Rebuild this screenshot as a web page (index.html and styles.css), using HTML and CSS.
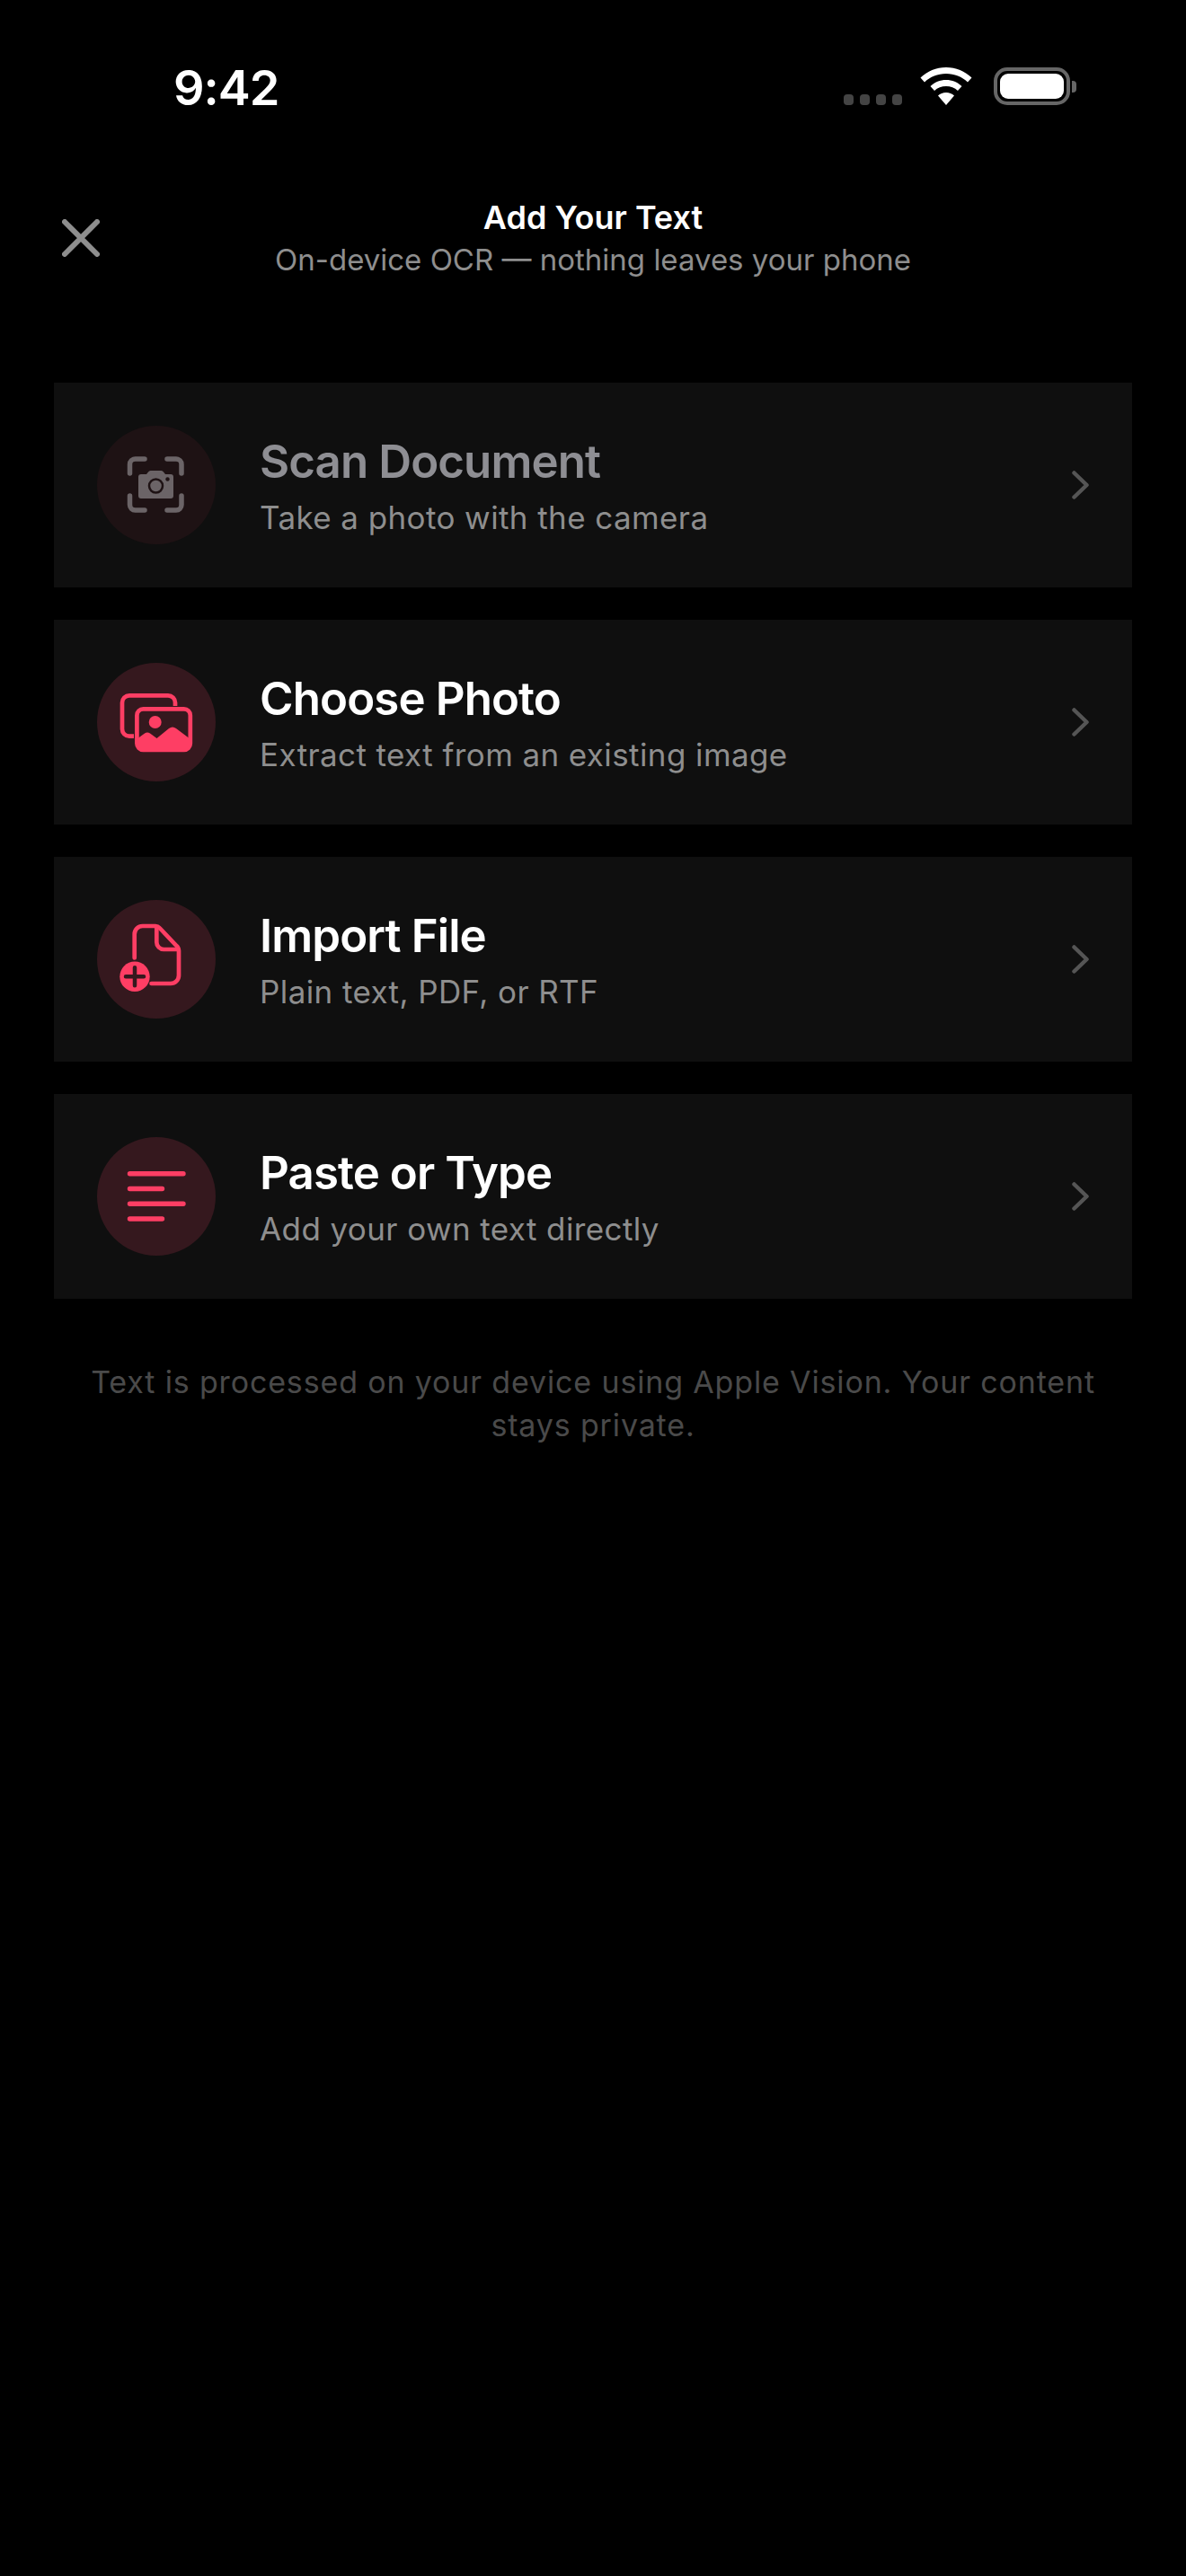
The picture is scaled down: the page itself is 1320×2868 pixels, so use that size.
FILE: index.html

```html
<!DOCTYPE html>
<html lang="en">
<head>
    <meta charset="UTF-8">
    <meta name="viewport" content="width=device-width, initial-scale=1.0">
    <title>Add Your Text</title>
    <link rel="stylesheet" href="styles.css">
</head>
<body>
<div class="status-bar">
    <span class="time">9:42</span>
    <div class="status-icons">
        <div class="signal"><i></i><i></i><i></i><i></i></div>
        <svg class="wifi" width="58" height="42" viewBox="0 0 58 42">
            <path fill="#fff" d="M29 0C18 0 8 4.300 0.500 11.500L5 16.500C11.300 10.500 19.700 7 29 7C38.300 7 46.700 10.500 53 16.500L57.500 11.500C50 4.300 40 0 29 0Z"/>
            <path fill="#fff" d="M29 14C22.300 14 16.200 16.600 11.500 21L16 26C19.500 22.700 24 21 29 21C34 21 38.500 22.700 42 26L46.500 21C41.800 16.600 35.700 14 29 14Z"/>
            <path fill="#fff" d="M29 28C25.500 28 22.300 29.300 20 31.500L29 42L38 31.500C35.700 29.300 32.500 28 29 28Z"/>
        </svg>
        <div class="battery"><div class="battery-level"></div></div>
        <div class="battery-nub"></div>
    </div>
</div>

<header class="top">
    <button class="close-btn" aria-label="Close">
        <svg width="42" height="42" viewBox="0 0 42 42"><path d="M3 3L39 39M39 3L3 39" stroke="#8e8e8e" stroke-width="6" stroke-linecap="round"/></svg>
    </button>
    <div class="top-text">
        <h1>Add Your Text</h1>
        <p>On-device OCR — nothing leaves your phone</p>
    </div>
</header>

<div class="options">
    <div class="option dim">
        <div class="icon">
            <svg width="132" height="132" viewBox="0 0 132 132">
                <path d="M36.500 53V43a6 6 0 0 1 6-6H53M78 37h10a6 6 0 0 1 6 6V53M36.500 78V88a6 6 0 0 0 6 6H53M78 94h10a6 6 0 0 0 6-6V78" fill="none" stroke="#6b6467" stroke-width="5.500" stroke-linecap="round"/>
                <path fill="#6b6467" d="M49 54h6l2-2.500a3 3 0 0 1 2.500-1.500h12a3 3 0 0 1 2.500 1.500l2 2.500h6a3 3 0 0 1 3 3v21a3 3 0 0 1-3 3H49a3 3 0 0 1-3-3V57a3 3 0 0 1 3-3Z"/>
                <circle cx="65.500" cy="67" r="7.500" fill="#6b6467" stroke="#1e1214" stroke-width="2.500"/>
                <circle cx="78.500" cy="59.500" r="2.200" fill="#1e1214"/>
            </svg>
        </div>
        <div class="option-text">
            <div class="option-title">Scan Document</div>
            <div class="option-sub">Take a photo with the camera</div>
        </div>
        <svg class="chevron" width="20" height="32" viewBox="0 0 20 32"><path d="M2.500 2.500L16.500 16L2.500 29.500" fill="none" stroke="#555" stroke-width="4.500" stroke-linecap="round" stroke-linejoin="round"/></svg>
    </div>

    <div class="option">
        <div class="icon">
            <svg width="132" height="132" viewBox="0 0 132 132">
                <path d="M41 81.700H36a8 8 0 0 1-8-8V44.300a8 8 0 0 1 8-8H79a8 8 0 0 1 8 8V48" fill="none" stroke="#fe3e64" stroke-width="4.700"/>
                <rect x="44.400" y="51.400" width="59.400" height="45.400" rx="7" fill="none" stroke="#fe3e64" stroke-width="4.700"/>
                <circle cx="64.700" cy="66" r="7" fill="#fe3e64"/>
                <path fill="#fe3e64" d="M44 85L53 78.500Q56 76.500 59 78.500L66.500 84L80 73Q84 70 88 73L104 85V91a8 8 0 0 1-8 8H52a8 8 0 0 1-8-8Z"/>
            </svg>
        </div>
        <div class="option-text">
            <div class="option-title">Choose Photo</div>
            <div class="option-sub">Extract text from an existing image</div>
        </div>
        <svg class="chevron" width="20" height="32" viewBox="0 0 20 32"><path d="M2.500 2.500L16.500 16L2.500 29.500" fill="none" stroke="#555" stroke-width="4.500" stroke-linecap="round" stroke-linejoin="round"/></svg>
    </div>

    <div class="option">
        <div class="icon">
            <svg width="132" height="132" viewBox="0 0 132 132">
                <path d="M41.700 64.500V38a9 9 0 0 1 9-9H65a6 6 0 0 1 4.500 2L88 50.500a8 8 0 0 1 3 6V84a9 9 0 0 1-9 9H60.500" fill="none" stroke="#fe3e64" stroke-width="4.700" stroke-linecap="round"/>
                <path d="M66.300 29V47a8 8 0 0 0 8 8H90" fill="none" stroke="#fe3e64" stroke-width="4.700"/>
                <circle cx="42" cy="85.300" r="16.700" fill="#fe3e64"/>
                <path d="M32 85.300H52M42 75.300V95.300" stroke="#35181e" stroke-width="4.500" stroke-linecap="round"/>
            </svg>
        </div>
        <div class="option-text">
            <div class="option-title">Import File</div>
            <div class="option-sub">Plain text, PDF, or RTF</div>
        </div>
        <svg class="chevron" width="20" height="32" viewBox="0 0 20 32"><path d="M2.500 2.500L16.500 16L2.500 29.500" fill="none" stroke="#555" stroke-width="4.500" stroke-linecap="round" stroke-linejoin="round"/></svg>
    </div>

    <div class="option">
        <div class="icon">
            <svg width="132" height="132" viewBox="0 0 132 132">
                <path d="M36.500 40.700H96M36.500 57.500H72.500M36.500 74.300H96M36.500 91H72.500" stroke="#fe3e64" stroke-width="5.400" stroke-linecap="round"/>
            </svg>
        </div>
        <div class="option-text">
            <div class="option-title">Paste or Type</div>
            <div class="option-sub">Add your own text directly</div>
        </div>
        <svg class="chevron" width="20" height="32" viewBox="0 0 20 32"><path d="M2.500 2.500L16.500 16L2.500 29.500" fill="none" stroke="#555" stroke-width="4.500" stroke-linecap="round" stroke-linejoin="round"/></svg>
    </div>
</div>

<p class="note">Text is processed on your device using Apple Vision. Your content stays private.</p>
</body>
</html>
```

FILE: styles.css

```css
body { font-family: Inter, "Liberation Sans", sans-serif; background-color: #000; color: #fff; margin: 0; height: 2868px; overflow: hidden; }

/* status bar */
.status-bar { display: flex; justify-content: space-between; align-items: flex-start; height: 208px; padding: 65px 122px 0 193px; box-sizing: border-box; }
.time { font-size: 54px; font-weight: 600; line-height: 65px; letter-spacing: -1px; }
.status-icons { display: flex; align-items: flex-start; margin-top: 10px; }
.signal { display: flex; gap: 7px; margin-top: 30px; margin-right: 20px; }
.signal i { display: block; width: 11px; height: 12px; border-radius: 4px; background-color: #444; }
.wifi { margin-right: 24px; }
.battery { width: 85px; height: 42px; box-sizing: border-box; border: 4.500px solid #666; border-radius: 15px; padding: 3px; }
.battery-level { height: 100%; background-color: #fff; border-radius: 9px; }
.battery-nub { width: 5px; height: 13px; margin: 15px 0 0 2px; background-color: #666; border-radius: 0 4px 4px 0; }

/* header */
.top { display: flex; align-items: center; height: 110px; position: relative; justify-content: center; }
.close-btn { position: absolute; left: 69px; top: 36px; padding: 0; border: none; background: none; width: 42px; height: 42px; }
.top-text { text-align: center; padding-top: 3px; }
.top h1 { margin: 0; font-size: 36px; font-weight: 600; line-height: 48px; }
.top p { margin: 0; font-size: 33px; line-height: 46px; color: #8e8e8e; }

/* options */
.options { display: flex; flex-direction: column; gap: 36px; margin: 108px 60px 0; }
.option { display: flex; align-items: center; height: 228px; padding: 0 48px; background-color: #0f0f0f; }
.icon { display: flex; width: 132px; height: 132px; flex-shrink: 0; border-radius: 50%; background-color: #35181e; }
.option-text { flex: 1; margin-left: 49px; }
.option-title { font-size: 51px; font-weight: 600; line-height: 64px; letter-spacing: -0.9px; }
.option-sub { font-size: 35px; line-height: 46px; margin-top: 7px; color: #8e8e8e; letter-spacing: 0.4px; }
.chevron { flex-shrink: 0; margin-right: -1px; }
.dim .icon { background-color: #1e1214; }
.dim .option-title { color: #8e8e93; }

.note { margin: 69px 90px 0; font-size: 34px; line-height: 48px; text-align: center; color: #4a4a4a; letter-spacing: 0.85px; }
```
